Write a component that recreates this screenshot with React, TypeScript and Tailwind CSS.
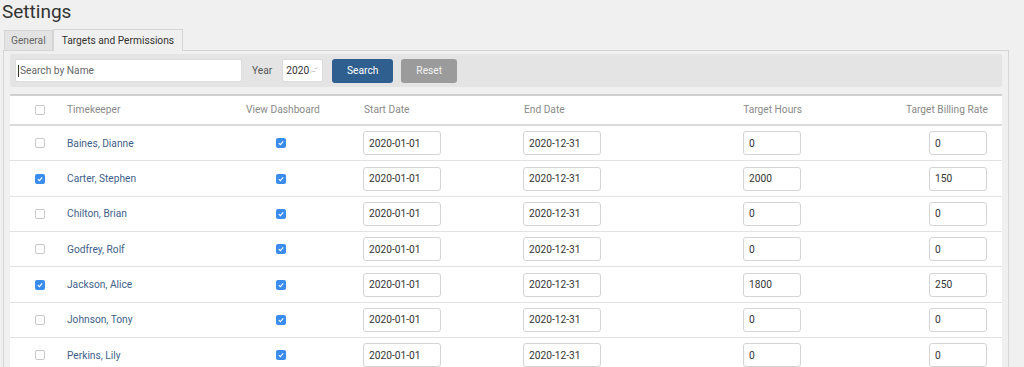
import { Fragment } from "react";

type Row = {
    selected: boolean;
    name: string;
    hours: string;
    rate: string;
};

const rows: Row[] = [
    { selected: false, name: "Baines, Dianne", hours: "0", rate: "0" },
    { selected: true, name: "Carter, Stephen", hours: "2000", rate: "150" },
    { selected: false, name: "Chilton, Brian", hours: "0", rate: "0" },
    { selected: false, name: "Godfrey, Rolf", hours: "0", rate: "0" },
    { selected: true, name: "Jackson, Alice", hours: "1800", rate: "250" },
    { selected: false, name: "Johnson, Tony", hours: "0", rate: "0" },
    { selected: false, name: "Perkins, Lily", hours: "0", rate: "0" },
];

const Check = ({ on }: { on: boolean }) =>
    on ? (
        <span className="flex h-[10px] w-[10px] items-center justify-center rounded-[2px] bg-[#3b8cef]">
            <svg viewBox="0 0 10 10" className="h-[8px] w-[8px]">
                <path d="M2.2 5.2 L4.2 7.1 L7.8 2.9" fill="none" stroke="#fff" strokeWidth="1.3" />
            </svg>
        </span>
    ) : (
        <span className="block h-[10px] w-[10px] rounded-[2px] border border-[#c9c9c9] bg-white" />
    );

const Field = ({ value, narrow }: { value: string; narrow?: boolean }) => (
    <div
        className={`flex h-[24px] items-center rounded-[3px] border border-[#d4d4d4] bg-white pl-[5px] text-[#333] ${
            narrow ? "w-[58px]" : "w-[78px]"
        }`}
    >
        {value}
    </div>
);

const cols = "grid grid-cols-[57px_179px_117px_160px_177px_130px_1fr]";

export default function App() {
    return (
        <div className="h-[367px] w-full overflow-hidden bg-[#f0f0f0] font-['Roboto',sans-serif] text-[10.2px]">
            <h1 className="pl-[2px] pt-[1px] text-[19px] leading-[22px] text-[#333]">Settings</h1>

            {/* tabs */}
            <div className="mt-[6px] flex h-[21px] items-end pl-[4px]">
                <div className="flex h-[20px] items-center border border-b-0 border-[#d5d5d5] bg-[#e3e3e3] px-[6px] text-[#666]">
                    General
                </div>
                <div className="relative z-10 -mb-px flex h-[22px] items-center border border-b-0 border-[#d5d5d5] bg-[#f0f0f0] px-[8px] text-[#333]">
                    Targets and Permissions
                </div>
            </div>

            <div className="ml-[3px] w-[1006px] border border-[#d5d5d5] px-[6px] pt-[3px]">
                {/* toolbar */}
                <div className="flex h-[33px] items-center rounded-[2px] bg-[#e4e4e4] px-[5px] text-[#555]">
                    <div className="relative flex h-[23px] w-[227px] items-center rounded-[2px] border border-[#dcdcdc] bg-white pl-[4px] text-[#666]">
                        <span className="absolute left-[2px] top-[5px] h-[12px] w-px bg-[#333]" />
                        Search by Name
                    </div>
                    <span className="ml-[10px]">Year</span>
                    <div className="ml-[10px] flex h-[23px] w-[41px] items-center gap-[2px] rounded-[2px] border border-[#dcdcdc] bg-white pl-[3px] text-[#333]">
                        2020
                        <svg viewBox="0 0 8 8" className="h-[7px] w-[7px]">
                            <path d="M0.5 5 L5 5 M4 2 L7.5 1" fill="none" stroke="#bbb" strokeWidth="1" />
                        </svg>
                    </div>
                    <button className="ml-[9px] h-[24px] w-[61px] rounded-[3px] bg-[#2f5f8f] text-white">Search</button>
                    <button className="ml-[8px] h-[24px] w-[56px] rounded-[3px] bg-[#9b9b9b] text-[#f2f2f2]">Reset</button>
                </div>

                {/* table */}
                <div className="mt-[7px] border-t-2 border-[#d0d0d0] bg-white">
                    <div className={`${cols} h-[30px] items-center border-b-2 border-[#dadada] text-[#8a8a8a]`}>
                        <div className="pl-[25px]">
                            <Check on={false} />
                        </div>
                        <div>Timekeeper</div>
                        <div>View Dashboard</div>
                        <div className="pl-[1px]">Start Date</div>
                        <div className="pl-[1px]">End Date</div>
                        <div className="flex justify-end pr-[28px]">Target Hours</div>
                        <div className="flex justify-end pr-[14px]">Target Billing Rate</div>
                    </div>
                    {rows.map((r) => (
                        <div key={r.name} className={`${cols} h-[35.35px] items-center border-b border-[#e2e2e2]`}>
                            <Fragment>
                                <div className="pl-[25px]">
                                    <Check on={r.selected} />
                                </div>
                                <div className="text-[#3e5f8a]">{r.name}</div>
                                <div className="pl-[30px]">
                                    <Check on={true} />
                                </div>
                                <div>
                                    <Field value="2020-01-01" />
                                </div>
                                <div>
                                    <Field value="2020-12-31" />
                                </div>
                                <div className="flex justify-end pr-[29px]">
                                    <Field value={r.hours} narrow />
                                </div>
                                <div className="flex justify-end pr-[15px]">
                                    <Field value={r.rate} narrow />
                                </div>
                            </Fragment>
                        </div>
                    ))}
                </div>
            </div>
        </div>
    );
}
